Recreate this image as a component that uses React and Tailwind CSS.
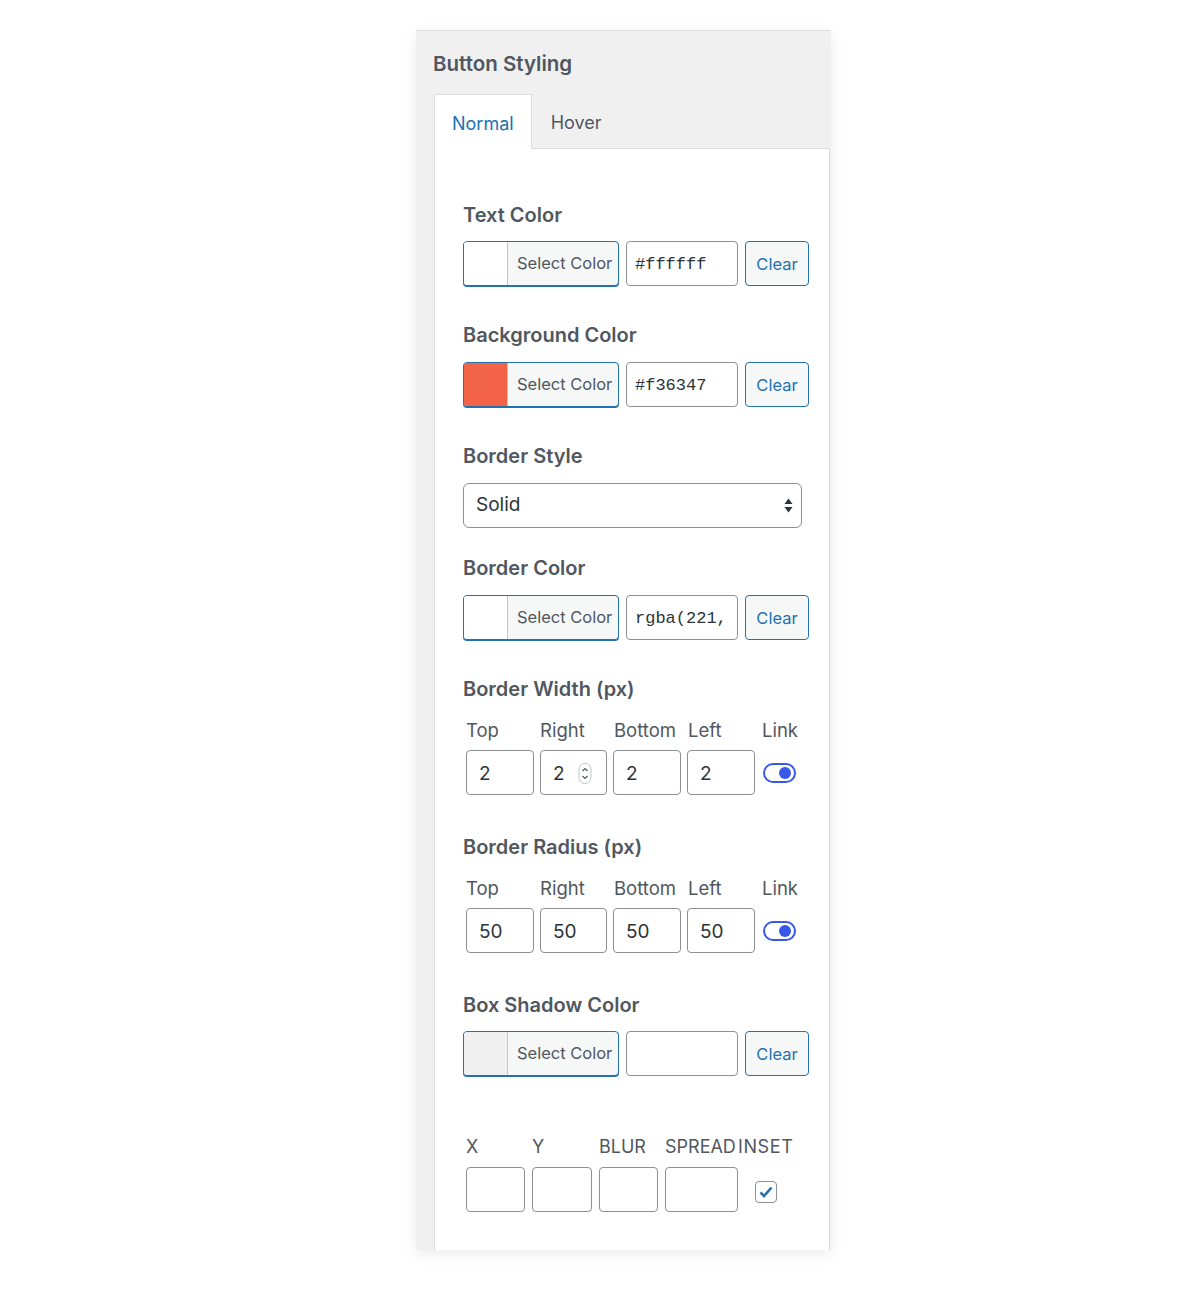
import React from "react";

// label styles shared by every section
const label = "text-[20px] font-semibold leading-[24px] text-[#50575e]";
const sub = "text-[18.5px] leading-[22px] text-[#50575e]";
const box = "h-[45px] rounded-[4px] border border-[#8c8f94] bg-white flex items-center pt-[3px] text-[19px] text-[#2c3338]";

const ColorRow = ({ swatch, value }) => (
  <div className="flex items-center">
    <div className="flex h-[45px] w-[156px] overflow-hidden rounded-[4px] border border-[#2271b1] shadow-[0_1px_0_#2271b1] bg-[#f6f7f7]">
      <div className="w-[44px] border-r border-[#c3c4c7]" style={{ background: swatch }} />
      <div className="flex flex-1 items-center pl-[9px] text-[16.5px] text-[#50575e]">Select Color</div>
    </div>
    <div className="ml-[7px] flex h-[45px] w-[112px] items-center rounded-[4px] border border-[#8c8f94] bg-white pl-[8px] pr-[9px] pt-[2px]">
      <div className="w-full overflow-hidden whitespace-nowrap font-['Liberation_Mono',monospace] text-[17px] text-[#2c3338]">{value}</div>
    </div>
    <div className="ml-[7px] flex h-[45px] w-[64px] items-center justify-center rounded-[4px] border border-[#2271b1] bg-[#f6f7f7] pt-[2px] text-[16.5px] text-[#2271b1]">
      Clear
    </div>
  </div>
);

const Toggle = () => (
  <div className="ml-[2px] flex h-[20px] w-[33px] items-center justify-end rounded-full border-2 border-[#3858e9] pr-[3px]">
    <div className="h-[12px] w-[12px] rounded-full bg-[#3858e9]" />
  </div>
);

const FourSides = ({ v, spinner }) => (
  <div>
    <div className="grid grid-cols-[68px_68px_68px_68px_auto] gap-x-[6px] pl-[3px]">
      {["Top", "Right", "Bottom", "Left", "Link"].map((t) => (
        <div key={t} className={sub + " whitespace-nowrap"}>{t}</div>
      ))}
    </div>
    <div className="mt-[9px] grid grid-cols-[68px_67px_68px_68px_auto] items-center gap-x-[6px] pl-[3px]">
      {[0, 1, 2, 3].map((i) => (
        <div key={i} className={box + " relative pl-[12px]"}>
          {v}
          {spinner && i === 1 && (
            <svg className="absolute left-[37px] top-[12px]" width="14" height="21" viewBox="0 0 14 21">
              <rect x="1" y="0.5" width="12" height="20" rx="6" fill="none" stroke="#c3c4c7" />
              <path d="M4.5 8 L7 5.5 L9.5 8" fill="none" stroke="#50575e" strokeWidth="1.2" />
              <path d="M4.5 13 L7 15.5 L9.5 13" fill="none" stroke="#50575e" strokeWidth="1.2" />
            </svg>
          )}
        </div>
      ))}
      <Toggle />
    </div>
  </div>
);

const App = () => {
  return (
    <div className="min-h-screen bg-white pt-[30px] font-['Inter',sans-serif]">
      <div className="ml-[416px] w-[415px] border-t border-[#dcdcde] bg-[#f0f0f1] pt-[19px] shadow-[0_4px_14px_rgba(0,0,0,0.08)]">
        <h2 className="pl-[17px] text-[20.5px] font-semibold leading-[28px] text-[#50575e]">Button Styling</h2>

        {/* tabs */}
        <div className="mt-[16px] flex pl-[18px]">
          <div className="relative z-10 -mb-px flex h-[55px] items-center border border-b-0 border-[#dcdcde] bg-white px-[17px] pt-[2px] text-[18px] text-[#2271b1]">
            Normal
          </div>
          <div className="flex h-[54px] items-center px-[19px] pt-[2px] text-[18px] text-[#50575e]">Hover</div>
        </div>

        <div className="mr-[1px] ml-[18px] border border-b-0 border-[#dcdcde] bg-white pb-[38px] pl-[28px] pt-[54px]">
          <div className={label + " mb-[14px]"}>Text Color</div>
          <ColorRow swatch="#ffffff" value="#ffffff" />

          <div className={label + " mt-[37px] mb-[15px]"}>Background Color</div>
          <ColorRow swatch="#f36347" value="#f36347" />

          <div className={label + " mt-[37px] mb-[15px]"}>Border Style</div>
          <div className="flex h-[45px] w-[339px] items-center justify-between rounded-[6px] border border-[#8c8f94] bg-white pl-[12px] pr-[8px] text-[19px] text-[#2c3338]">
            <span>Solid</span>
            <svg width="9" height="15" viewBox="0 0 9 15">
              <path d="M4.5 0.5 L8.5 6 L0.5 6 Z" fill="#2c3338" />
              <path d="M4.5 14.5 L8.5 9 L0.5 9 Z" fill="#2c3338" />
            </svg>
          </div>

          <div className={label + " mt-[28px] mb-[15px]"}>Border Color</div>
          <ColorRow swatch="#ffffff" value="rgba(221,221,221,1)" />

          <div className={label + " mt-[37px] mb-[18px]"}>Border Width (px)</div>
          <FourSides v="2" spinner />

          <div className={label + " mt-[40px] mb-[18px]"}>Border Radius (px)</div>
          <FourSides v="50" />

          <div className={label + " mt-[40px] mb-[14px]"}>Box Shadow Color</div>
          <ColorRow swatch="#f0f0f1" value="" />

          <div className="mt-[60px] flex pl-[3px] text-[18px] leading-[22px] text-[#50575e]">
            <div className="w-[66px]">X</div>
            <div className="w-[67px]">Y</div>
            <div className="w-[66px]">BLUR</div>
            <div className="w-[73px] whitespace-nowrap">SPREAD</div>
            <div className="tracking-[0.6px]">INSET</div>
          </div>
          <div className="mt-[9px] flex items-center gap-[7px] pl-[3px]">
            <div className={box + " w-[59px]"} />
            <div className={box + " w-[60px]"} />
            <div className={box + " w-[59px]"} />
            <div className={box + " w-[73px]"} />
            <div className="ml-[10px] mt-[4px] flex h-[22px] w-[22px] items-center justify-center rounded-[4px] border border-[#8c8f94] bg-white">
              <svg width="14" height="12" viewBox="0 0 14 12">
                <path d="M1.5 6.5 L5 10 L12.5 1.5" fill="none" stroke="#2271b1" strokeWidth="2.6" />
              </svg>
            </div>
          </div>
        </div>
      </div>
    </div>
  );
};

export default App;
